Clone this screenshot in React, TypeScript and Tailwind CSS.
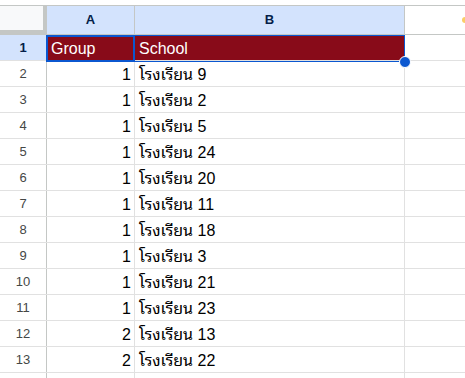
import React from 'react';

const rows: [number, string][] = [
  [1, 'โรงเรียน 9'],
  [1, 'โรงเรียน 2'],
  [1, 'โรงเรียน 5'],
  [1, 'โรงเรียน 24'],
  [1, 'โรงเรียน 20'],
  [1, 'โรงเรียน 11'],
  [1, 'โรงเรียน 18'],
  [1, 'โรงเรียน 3'],
  [1, 'โรงเรียน 21'],
  [1, 'โรงเรียน 23'],
  [2, 'โรงเรียน 13'],
  [2, 'โรงเรียน 22'],
];

const font = { fontFamily: '"Liberation Sans", Arial, "Noto Sans Thai Looped", "Noto Sans Thai", "Noto Sans", sans-serif' };

export default function App() {
  return (
    <div className="w-[465px] h-[378px] overflow-hidden bg-white relative" style={font}>
      <div className="h-[5px]" />

      {/* column headers */}
      <div className="flex h-[30px] border-t border-b border-[#c4c7c5]">
        <div className="w-[47px] shrink-0 bg-[#f8f9fa] border-r-[4px] border-b-[4px] border-[#c4c7c5]" />
        <div className="w-[88px] shrink-0 bg-[#d3e3fd] border-r border-[#c4c7c5] flex items-center justify-center text-[13px] font-bold text-[#041e49]">A</div>
        <div className="w-[270px] shrink-0 bg-[#d3e3fd] border-r border-[#c4c7c5] flex items-center justify-center text-[13px] font-bold text-[#041e49]">B</div>
        <div className="flex-1" />
      </div>

      {/* row 1 */}
      <div className="flex h-[26px] border-b border-[#e1e1e1]">
        <div className="w-[47px] shrink-0 bg-[#d3e3fd] border-r border-[#c4c7c5] flex items-center justify-center text-[13px] font-bold text-[#041e49]">1</div>
        <div className="w-[88px] shrink-0 bg-[#880b19] text-white text-[16px] leading-[22px] flex items-end pl-[4px]">Group</div>
        <div className="w-[270px] shrink-0 bg-[#880b19] text-white text-[16px] leading-[22px] flex items-end pl-[4px]">School</div>
        <div className="flex-1" />
      </div>

      {rows.map(([g, s], i) => (
        <div key={i} className="flex h-[26px] border-b border-[#e1e1e1]">
          <div className="w-[47px] shrink-0 border-r border-[#c4c7c5] flex items-center justify-center text-[13px] text-[#444746]">{i + 2}</div>
          <div className="w-[88px] shrink-0 border-r border-[#e1e1e1] text-[16px] leading-[22px] text-black flex items-end justify-end pr-[3px]">{g}</div>
          <div className="w-[270px] shrink-0 border-r border-[#e1e1e1] text-[16px] leading-[22px] text-black flex items-end pl-[4px]">{s}</div>
          <div className="flex-1" />
        </div>
      ))}

      <div className="flex h-[26px]">
        <div className="w-[47px] shrink-0 border-r border-[#c4c7c5]" />
        <div className="w-[88px] shrink-0 border-r border-[#e1e1e1]" />
        <div className="w-[270px] shrink-0 border-r border-[#e1e1e1]" />
      </div>

      {/* selection overlays */}
      <div className="absolute left-[46px] top-[35px] w-[359px] h-[27px] border border-[#0b57d0] pointer-events-none" />
      <div className="absolute left-[46px] top-[35px] w-[89px] h-[27px] border-2 border-[#0b57d0] pointer-events-none" />
      <div className="absolute left-[399px] top-[56px] w-[12px] h-[12px] rounded-full bg-[#0b57d0] border border-white" />
      <div className="absolute left-[462px] top-[17px] w-[6px] h-[6px] rounded-full bg-[#f9ab00] opacity-60" />
    </div>
  );
}
